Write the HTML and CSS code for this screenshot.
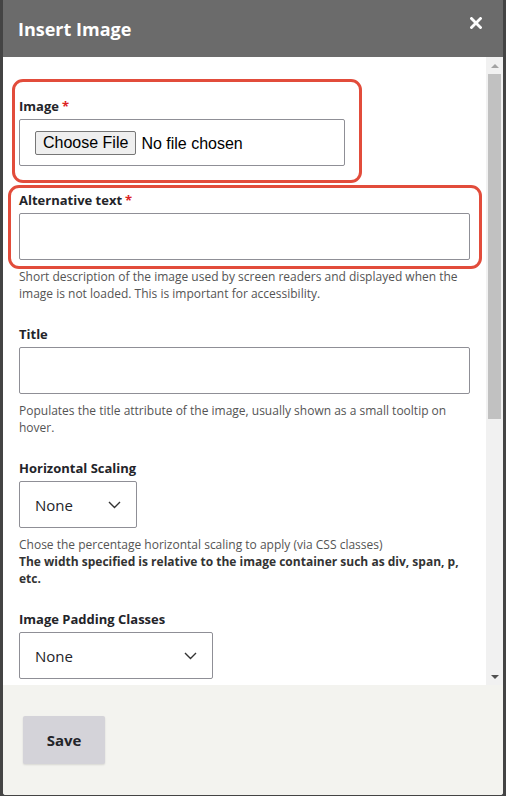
FILE: index.html
```html
<!DOCTYPE html>
<html lang="en">
<head>
<meta charset="utf-8">
<title>Insert Image</title>
<link rel="stylesheet" href="styles.css">
</head>
<body>
<div class="dialog">
  <header class="dlg-head">
    <h1 class="dlg-title">Insert Image</h1>
    <button class="dlg-close" type="button" aria-label="Close">
      <svg width="12" height="12" viewBox="0 0 12 12"><path d="M1.5 1.5 L10.5 10.5 M10.5 1.5 L1.5 10.5" stroke="#fff" stroke-width="2.8" stroke-linecap="square"/></svg>
    </button>
  </header>
  <div class="dlg-body">
    <div class="dlg-content">
      <div class="field field-image">
        <label class="field-label">Image<span class="req">*</span></label>
        <div class="file-input">
          <span class="file-btn">Choose File</span>
          <span class="file-name">No file chosen</span>
        </div>
      </div>
      <div class="field">
        <label class="field-label">Alternative text<span class="req">*</span></label>
        <div class="text-input wide"></div>
        <p class="help">Short description of the image used by screen readers and displayed when the image is not loaded. This is important for accessibility.</p>
      </div>
      <div class="field">
        <label class="field-label">Title</label>
        <div class="text-input wide"></div>
        <p class="help">Populates the title attribute of the image, usually shown as a small tooltip on hover.</p>
      </div>
      <div class="field">
        <label class="field-label">Horizontal Scaling</label>
        <div class="select select-sm">
          <span>None</span>
          <svg class="chev" width="13" height="8" viewBox="0 0 13 8"><path d="M1 1 L6.5 6.5 L12 1" fill="none" stroke="#333" stroke-width="1.4"/></svg>
        </div>
        <p class="help">Chose the percentage horizontal scaling to apply (via CSS classes)<br><strong>The width specified is relative to the image container such as div, span, p, etc.</strong></p>
      </div>
      <div class="field">
        <label class="field-label">Image Padding Classes</label>
        <div class="select select-md">
          <span>None</span>
          <svg class="chev" width="13" height="8" viewBox="0 0 13 8"><path d="M1 1 L6.5 6.5 L12 1" fill="none" stroke="#333" stroke-width="1.4"/></svg>
        </div>
      </div>
      <div class="annot annot-1"></div>
      <div class="annot annot-2"></div>
    </div>
    <div class="scrollbar">
      <div class="sb-btn"><span class="tri-up"></span></div>
      <div class="sb-track"><div class="sb-thumb"></div></div>
      <div class="sb-btn"><span class="tri-down"></span></div>
    </div>
  </div>
  <footer class="dlg-foot">
    <button class="save" type="button">Save</button>
  </footer>
</div>
</body>
</html>
```
FILE: styles.css
```css
html, body {
  margin: 0;
  padding: 0;
  height: 100%;
  background: #444444;
  overflow: hidden;
}
body {
  font-family: "Open Sans", "Noto Sans", sans-serif;
  color: #232429;
}
.dialog {
  width: 500px;
  height: 795px;
  margin: 0 3px;
  display: flex;
  flex-direction: column;
  background: #fff;
  border-radius: 0 0 3px 3px;
  overflow: hidden;
}
.dlg-head {
  height: 57px;
  flex: none;
  background: #6b6b6b;
  display: flex;
  align-items: center;
  justify-content: space-between;
  padding: 0 21px 0 15px;
}
.dlg-title {
  margin: 0;
  font-size: 18px;
  font-weight: 700;
  color: #fff;
  line-height: 24px;
}
.dlg-close {
  width: 12px;
  height: 12px;
  padding: 0;
  border: 0;
  background: none;
  display: flex;
  align-self: flex-start;
  margin-top: 17px;
}
.dlg-body {
  height: 628px;
  flex: none;
  display: flex;
}
.dlg-content {
  flex: 1;
  position: relative;
  overflow: hidden;
  padding: 40px 16px 0 16px;
}
.field {
  margin-bottom: 23px;
}
.field-image {
  margin-bottom: 25px;
}
.field-label {
  display: block;
  font-size: 13px;
  font-weight: 700;
  line-height: 18px;
  margin-bottom: 4px;
  color: #232429;
}
.req {
  color: #dc2323;
  margin-left: 3px;
}
.file-input {
  width: 326px;
  height: 47px;
  box-sizing: border-box;
  border: 1px solid #8f8f96;
  border-radius: 2px;
  display: flex;
  align-items: center;
  padding-left: 15px;
  font-family: "Liberation Sans", Arial, sans-serif;
  font-size: 16px;
  color: #000;
}
.file-btn {
  height: 24px;
  box-sizing: border-box;
  border: 1px solid #767676;
  border-radius: 2px;
  background: #efefef;
  padding: 0 7px;
  display: flex;
  align-items: center;
  line-height: 1;
}
.file-name {
  margin-left: 5px;
  position: relative;
  top: 1px;
}
.text-input {
  height: 47px;
  box-sizing: border-box;
  border: 1px solid #8f8f96;
  border-radius: 2px;
}
.help {
  margin: 8px 0 0;
  font-size: 12px;
  line-height: 17px;
  color: #545454;
}
.help strong {
  color: #333;
}
.select {
  height: 47px;
  box-sizing: border-box;
  border: 1px solid #8f8f96;
  border-radius: 2px;
  display: flex;
  align-items: center;
  justify-content: space-between;
  padding: 0 15px 0 15px;
  font-size: 15px;
  color: #232429;
}
.select-sm { width: 118px; }
.select-md { width: 194px; }
.chev { display: block; }
.annot {
  position: absolute;
  border: 3px solid #e24c3b;
  border-radius: 11px;
  box-sizing: border-box;
  pointer-events: none;
}
.annot-1 {
  left: 9px;
  top: 22px;
  width: 350px;
  height: 104px;
}
.annot-2 {
  left: 5px;
  top: 128px;
  width: 474px;
  height: 84px;
}
.scrollbar {
  width: 17px;
  flex: none;
  background: #f1f1f1;
  display: flex;
  flex-direction: column;
}
.sb-btn {
  height: 17px;
  flex: none;
  display: flex;
  align-items: center;
  justify-content: center;
}
.tri-up {
  width: 0;
  height: 0;
  border-left: 4px solid transparent;
  border-right: 4px solid transparent;
  border-bottom: 4px solid #a3a3a3;
}
.tri-down {
  width: 0;
  height: 0;
  border-left: 4px solid transparent;
  border-right: 4px solid transparent;
  border-top: 4px solid #505050;
}
.sb-track {
  flex: 1;
  padding: 0 2px;
}
.sb-thumb {
  height: 345px;
  background: #c1c1c1;
}
.dlg-foot {
  flex: 1;
  background: #f3f3ef;
  padding: 31px 20px 0;
}
.save {
  width: 82px;
  height: 48px;
  border: 0;
  border-radius: 2px;
  background: #d4d3d9;
  box-shadow: 0 1px 2px rgba(0,0,0,0.12);
  font-family: "Open Sans", "Noto Sans", sans-serif;
  font-size: 15px;
  font-weight: 700;
  color: #232429;
  padding: 0;
}
```
